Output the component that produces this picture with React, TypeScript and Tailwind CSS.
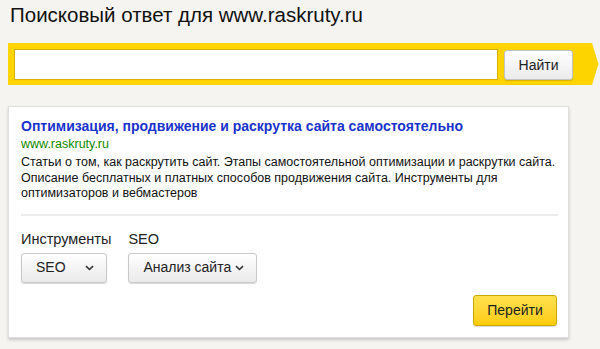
import React from "react";

function Chevron() {
  return (
    <svg width="9" height="6" viewBox="0 0 9 6" className="ml-auto">
      <path d="M1 1.2 L4.5 4.5 L8 1.2" fill="none" stroke="#333" strokeWidth="1.6" />
    </svg>
  );
}

export default function App() {
  return (
    <div
      className="w-[600px] h-[349px] bg-[#f5f4f0] overflow-hidden text-[#000]"
      style={{ fontFamily: '"Liberation Sans", Arial, sans-serif' }}
    >
      <div className="pl-[10px] pt-[3px] h-[43px] text-[20.5px] leading-[24px] text-[#111]">
        Поисковый ответ для www.raskruty.ru
      </div>
      <div className="flex ml-[8px] h-[42px]">
        <div className="w-[584px] h-[42px] bg-[#fdd300] flex items-start pt-[6px] pl-[6px] gap-[6px]">
          <input
            className="w-[484px] h-[31px] bg-white border border-[#d8b200] outline-none px-2 text-[14px]"
            defaultValue=""
          />
          <button className="mt-[1px] w-[69px] h-[30px] rounded-[3px] border border-[#c4c4c4] bg-gradient-to-b from-[#ffffff] to-[#ebebeb] text-[14px] text-[#222] shadow-[0_1px_1px_rgba(0,0,0,0.15)]">
            Найти
          </button>
        </div>
        <svg width="7" height="42" viewBox="0 0 7 42">
          <path d="M0 0 L6.5 21 L0 42 Z" fill="#fdd300" />
        </svg>
      </div>
      <div className="mt-[21px] ml-[8px] w-[561px] h-[232px] bg-white border border-[#dedede] shadow-[0_2px_3px_rgba(0,0,0,0.18)] pl-[12px] pr-[11px] pt-[11px] flex flex-col">
        <div className="text-[14px] leading-[17px] font-bold text-[#1a33cc]">
          Оптимизация, продвижение и раскрутка сайта самостоятельно
        </div>
        <div className="text-[12.5px] leading-[15px] text-[#118800] mt-[2px]">www.raskruty.ru</div>
        <div className="text-[12.5px] leading-[15.5px] text-[#111] mt-[3px]">
          Статьи о том, как раскрутить сайт. Этапы самостоятельной оптимизации и раскрутки сайта.
          <br />
          Описание бесплатных и платных способов продвижения сайта. Инструменты для
          <br />
          оптимизаторов и вебмастеров
        </div>
        <div className="mt-[12px] h-[2px] bg-[#ececec] w-[537px]" />
        <div className="flex gap-[17px] mt-[15px]">
          <div className="flex flex-col">
            <div className="text-[14.5px] leading-[17px] text-[#222]">Инструменты</div>
            <button className="mt-[5px] w-[86px] h-[30px] rounded-[3px] border border-[#c8c8c8] bg-gradient-to-b from-[#ffffff] to-[#eaeaea] shadow-[0_1px_1px_rgba(0,0,0,0.15)] flex items-center pl-[14px] pr-[12px] text-[14px] text-[#222]">
              SEO
              <Chevron />
            </button>
          </div>
          <div className="flex flex-col">
            <div className="text-[14.5px] leading-[17px] text-[#222]">SEO</div>
            <button className="mt-[5px] w-[129px] h-[30px] rounded-[3px] border border-[#c8c8c8] bg-gradient-to-b from-[#ffffff] to-[#eaeaea] shadow-[0_1px_1px_rgba(0,0,0,0.15)] flex items-center pl-[14px] pr-[12px] text-[14px] text-[#222]">
              Анализ сайта
              <Chevron />
            </button>
          </div>
        </div>
        <div className="flex justify-end mt-[12px] pr-[0px]">
          <button className="w-[84px] h-[31px] rounded-[3px] border border-[#c9a900] bg-gradient-to-b from-[#ffe14d] to-[#ffcc00] text-[14px] text-[#222] shadow-[0_1px_1px_rgba(0,0,0,0.15)]">
            Перейти
          </button>
        </div>
      </div>
    </div>
  );
}
